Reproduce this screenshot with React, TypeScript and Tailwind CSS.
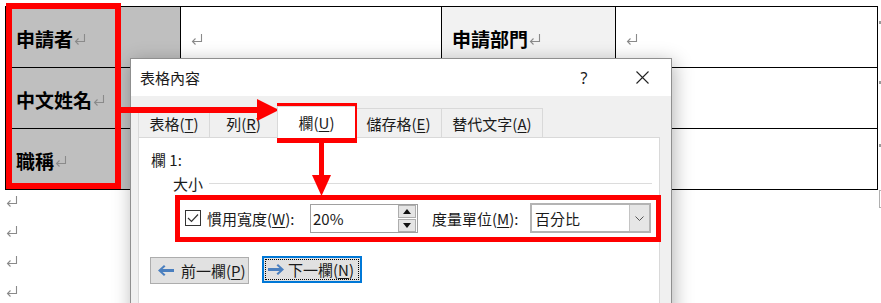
import React from "react";

function Ret({ className = "" }: { className?: string }) {
  return (
    <svg width="12" height="11" viewBox="0 0 12 11" className={className} fill="none" stroke="#8a8a8a" strokeWidth="1.1">
      <path d="M10.5 0 V7.5 H1.5" />
      <path d="M4.5 4.5 L1.5 7.5 L4.5 10.5" />
    </svg>
  );
}

function Cell({ children, bg = "bg-white" }: { children?: React.ReactNode; bg?: string }) {
  return (
    <div className={`h-[61px] border-r border-b border-black flex items-center pl-[10px] pt-[3px] ${bg}`}>{children}</div>
  );
}

function Label({ text }: { text: string }) {
  return (
    <div className="flex items-center">
      <span className="text-[19px] font-bold leading-none text-black">{text}</span>
      <Ret className="ml-[1px] mt-[2px]" />
    </div>
  );
}

function Tab({ w, children }: { w: string; children: React.ReactNode }) {
  return (
    <div className={`${w} h-[29px] border-t border-l border-[#d9d9d9] bg-[#f0f0f0] flex items-center justify-center leading-none`}>
      {children}
    </div>
  );
}

function U({ children }: { children: React.ReactNode }) {
  return <span className="underline underline-offset-[2px] decoration-1">{children}</span>;
}

export default function App() {
  return (
    <div className="relative w-[881px] h-[303px] overflow-hidden bg-white font-['Noto_Sans_CJK_TC','Noto_Sans',sans-serif]">
      {/* table */}
      <div className="flex items-start pt-[6px] pl-[5px]">
        <div className="grid grid-cols-[175px_261px_174px_262px] auto-rows-[61px] content-start border-l border-t border-black w-[873px]">
          <Cell bg="bg-[#bfbfbf]"><Label text="申請者" /></Cell>
          <Cell><Ret className="mt-[2px]" /></Cell>
          <Cell bg="bg-[#f2f2f2]"><Label text="申請部門" /></Cell>
          <Cell><Ret className="mt-[2px]" /></Cell>
          <Cell bg="bg-[#bfbfbf]"><Label text="中文姓名" /></Cell>
          <Cell />
          <Cell />
          <Cell />
          <Cell bg="bg-[#bfbfbf]"><Label text="職稱" /></Cell>
          <Cell />
          <Cell />
          <Cell />
        </div>
        <div className="flex flex-col pl-[1px]">
          <div className="h-[61px] flex items-start pt-[15px]"><div className="w-[2px] h-[3px] bg-[#9a9a9a]" /></div>
          <div className="h-[61px] flex items-start pt-[14px]"><div className="w-[2px] h-[3px] bg-[#9a9a9a]" /></div>
          <div className="h-[61px] flex items-start pt-[16px]"><div className="w-[2px] h-[3px] bg-[#9a9a9a]" /></div>
          <div className="w-[3px] h-[18px] border-l border-t border-b border-[#b0b0b0] mt-[1px]" />
        </div>
      </div>
      <div className="flex flex-col gap-[19px] pl-[6px] -mt-[12px]">
        <Ret />
        <Ret />
        <Ret />
        <Ret />
      </div>

      {/* dialog */}
      <div className="absolute left-[130px] top-[58px] w-[542px] h-[260px] border border-[#8f8f8f] bg-[#f0f0f0] shadow-[2px_4px_18px_rgba(0,0,0,0.3)] flex flex-col text-[15px] text-[#1a1a1a]">
        <div className="h-[37px] shrink-0 bg-white flex items-center pl-[9px]">
          <span className="leading-none">表格內容</span>
          <span className="ml-auto w-[46px] text-center leading-none font-['Noto_Sans',sans-serif] text-[16px]">?</span>
          <span className="ml-[12px] mr-[6px] w-[46px] flex justify-center">
            <svg width="13" height="13" viewBox="0 0 13 13" stroke="#222" strokeWidth="1.1">
              <path d="M0.5 0.5 L12.5 12.5 M12.5 0.5 L0.5 12.5" />
            </svg>
          </span>
        </div>
        <div className="flex-1 px-[7px] pt-[12px]">
          <div className="flex items-end h-[29px]">
            <Tab w="w-[71px]">表格(<U>T</U>)</Tab>
            <Tab w="w-[68px]">列(<U>R</U>)</Tab>
            <div className="relative z-10 w-[78px] h-[32px] -mb-px border-t border-l border-[#d9d9d9] bg-white flex items-center justify-center leading-none">
              欄(<U>U</U>)
            </div>
            <Tab w="w-[86px]">儲存格(<U>E</U>)</Tab>
            <div className="w-[102px] h-[29px] border-t border-l border-r border-[#d9d9d9] bg-[#f0f0f0] flex items-center justify-center leading-none">
              替代文字(<U>A</U>)
            </div>
          </div>
          <div className="w-[522px] h-[200px] border border-[#d9d9d9] bg-white pl-[12px] pt-[12px]">
            <div className="h-[20px] leading-[20px]">欄 1:</div>
            <div className="flex items-center h-[20px] mt-[3px] ml-[22px]">
              <span className="leading-none">大小</span>
              <div className="flex-1 h-px bg-[#dcdcdc] ml-[6px] mr-[7px]" />
            </div>
            <div className="flex items-center h-[30px] mt-[10px] ml-[34px]">
              <div className="w-[16px] h-[16px] border border-[#333] bg-white flex items-center justify-center">
                <svg width="12" height="10" viewBox="0 0 12 10" fill="none" stroke="#333" strokeWidth="1.2">
                  <path d="M1 5 L4.5 8.5 L11 1.5" />
                </svg>
              </div>
              <div className="ml-[6px] w-[103px] leading-none">慣用寬度(<U>W</U>):</div>
              <div className="w-[108px] h-[29px] border border-[#a0a0a0] bg-white flex items-center">
                <span className="pl-[2px] leading-none">20%</span>
                <div className="ml-auto mr-px flex flex-col gap-px">
                  <div className="w-[18px] h-[13px] bg-[#e5e5e5] border border-[#adadad] flex items-center justify-center">
                    <svg width="8" height="5" viewBox="0 0 8 5"><path d="M0 5 L4 0 L8 5 Z" fill="#111" /></svg>
                  </div>
                  <div className="w-[18px] h-[13px] bg-[#e5e5e5] border border-[#adadad] flex items-center justify-center">
                    <svg width="8" height="5" viewBox="0 0 8 5"><path d="M0 0 L4 5 L8 0 Z" fill="#111" /></svg>
                  </div>
                </div>
              </div>
              <div className="ml-[14px] w-[98px] leading-none">度量單位(<U>M</U>):</div>
              <div className="w-[121px] h-[30px] border-2 border-[#b4b4b4] bg-white flex items-stretch">
                <span className="flex-1 flex items-center pl-[3px] leading-none">百分比</span>
                <div className="w-[20px] bg-[#e6e6e6] border-l border-[#c4c4c4] flex items-center justify-center">
                  <svg width="9" height="5" viewBox="0 0 9 5" fill="none" stroke="#555" strokeWidth="1"><path d="M0.5 0.5 L4.5 4.5 L8.5 0.5" /></svg>
                </div>
              </div>
            </div>
            <div className="flex gap-[13px] mt-[24px] -ml-px">
              <div className="w-[99px] h-[27px] bg-[#e1e1e1] border border-[#adadad] flex items-center pl-[7px]">
                <svg width="16" height="11" viewBox="0 0 16 11"><path d="M0 5.5 L6 0 L7.5 1.5 L4.5 4 L16 4 L16 7 L4.5 7 L7.5 9.5 L6 11 Z" fill="#4a7fbf" /></svg>
                <span className="ml-[7px] leading-none">前一欄(<U>P</U>)</span>
              </div>
              <div className="w-[100px] h-[27px] -mt-px bg-[#e1e1e1] border-2 border-[#0078d7] p-[1px]">
                <div className="w-full h-full border border-dotted border-black flex items-center pl-[2px]">
                  <svg width="16" height="11" viewBox="0 0 16 11"><path d="M16 5.5 L10 0 L8.5 1.5 L11.5 4 L0 4 L0 7 L11.5 7 L8.5 9.5 L10 11 Z" fill="#4a7fbf" /></svg>
                  <span className="ml-[4px] leading-none">下一欄(<U>N</U>)</span>
                </div>
              </div>
            </div>
          </div>
        </div>
      </div>

      {/* annotations */}
      <div className="absolute left-[6px] top-[3px] w-[115px] h-[186px] border-[6px] border-[#ff0000] pointer-events-none" />
      <div className="absolute left-[277px] top-[103px] w-[80px] h-[40px] border-[5px] border-[#ff0000] pointer-events-none" />
      <div className="absolute left-[175px] top-[195px] w-[486px] h-[47px] border-[5px] border-[#ff0000] pointer-events-none" />
      <svg className="absolute left-0 top-0 pointer-events-none" width="881" height="303" viewBox="0 0 881 303">
        <rect x="120" y="107" width="140" height="6" fill="#ff0000" />
        <path d="M257 99 L279 110 L257 121 Z" fill="#ff0000" />
        <rect x="319" y="142" width="5" height="36" fill="#ff0000" />
        <path d="M312 175 L331 175 L321.5 196 Z" fill="#ff0000" />
      </svg>
    </div>
  );
}
